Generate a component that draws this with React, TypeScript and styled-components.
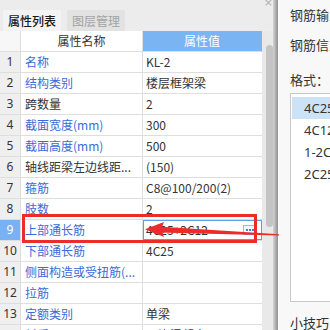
import React from 'react';
import styled, { createGlobalStyle } from 'styled-components';

const Global = createGlobalStyle`
  html, body { margin: 0; padding: 0; background: #fff; }
  body {
    font-family: "Noto Sans CJK SC", "Noto Sans", sans-serif;
    font-size: 12px;
    color: #333;
  }
`;

const Screen = styled.div`
  position: relative;
  width: 330px;
  height: 330px;
  overflow: hidden;
  display: flex;
  background: #ececec;
`;

const LeftPane = styled.div`
  width: 273px;
  flex-shrink: 0;
  display: flex;
  flex-direction: column;
  background: #ececec;
`;

const TitleStrip = styled.div`
  height: 10px;
  display: flex;
  justify-content: flex-end;
  align-items: flex-end;
  overflow: hidden;
`;

const CloseGlyph = styled.span`
  font-family: "DejaVu Sans", sans-serif;
  font-size: 11px;
  line-height: 11px;
  color: #b0b0b0;
  margin-bottom: 2px;
`;

const TabBar = styled.div`
  height: 21px;
  display: flex;
  align-items: stretch;
  gap: 6px;
  padding-left: 3px;
`;

const Tab = styled.div<{ $active?: boolean }>`
  display: flex;
  align-items: center;
  padding: 0 5px;
  font-size: 12px;
  background: ${(p) => (p.$active ? '#f3f3f3' : '#e2e2e2')};
  color: ${(p) => (p.$active ? '#1a1a1a' : '#a3a3a3')};
  font-weight: ${(p) => (p.$active ? 500 : 400)};
`;

const Body = styled.div`
  flex: 1;
  display: flex;
  min-height: 0;
`;

const Table = styled.div`
  width: 262px;
  flex-shrink: 0;
  background: #fff;
  display: flex;
  flex-direction: column;
`;

const Row = styled.div`
  display: grid;
  grid-template-columns: 21px 122px 119px;
  height: 21px;
  flex-shrink: 0;
`;

const Cell = styled.div`
  box-sizing: border-box;
  border-bottom: 1px solid #dedede;
  border-right: 1px solid #dedede;
  display: flex;
  align-items: center;
  white-space: nowrap;
  overflow: hidden;
  line-height: 20px;
`;

const NumCell = styled(Cell)<{ $selected?: boolean; $head?: boolean }>`
  justify-content: center;
  background: ${(p) => (p.$selected ? '#78b2f2' : p.$head ? '#f7f7f7' : '#efefef')};
  color: ${(p) => (p.$selected ? '#fff' : '#333')};
  font-family: "Noto Sans", sans-serif;
  font-size: 12px;
`;

const HeadCell = styled(Cell)<{ $blue?: boolean }>`
  justify-content: center;
  background: ${(p) => (p.$blue ? '#7ab4f3' : '#fff')};
  color: ${(p) => (p.$blue ? '#fff' : '#333')};
  border-right-color: ${(p) => (p.$blue ? '#7ab4f3' : '#dedede')};
`;

const NameCell = styled(Cell)<{ $link?: boolean }>`
  padding-left: 4px;
  color: ${(p) => (p.$link ? '#3a6ad8' : '#333')};
`;

const ValueCell = styled(Cell)<{ $editing?: boolean }>`
  padding-left: 3px;
  padding-right: 3px;
  justify-content: space-between;
  border-right: none;
  color: #333;
  box-shadow: ${(p) => (p.$editing ? 'inset 0 0 0 1px #5d9de8' : 'none')};
`;

const DotsButton = styled.span`
  flex-shrink: 0;
  width: 14px;
  height: 10px;
  box-sizing: border-box;
  border: 1px solid #8fbcf0;
  background: #f3f8fe;
  display: flex;
  align-items: center;
  justify-content: center;
  gap: 1px;
  margin-right: 2px;
`;

const Dot = styled.span`
  width: 2px;
  height: 2px;
  background: #3c7fdc;
`;

const Scrollbar = styled.div`
  width: 11px;
  flex-shrink: 0;
  background: #e9e9e9;
  padding-top: 14px;
  box-sizing: border-box;
`;

const Thumb = styled.div`
  margin-left: 4px;
  width: 7px;
  height: 182px;
  border-radius: 4px;
  background: #c4c4c4;
`;

const Splitter = styled.div`
  width: 5px;
  flex-shrink: 0;
  background: linear-gradient(to right, #d6d6d6, #8e8e8e);
`;

const RightPane = styled.div`
  flex: 1;
  min-width: 0;
  background: #f8f8f8;
  border-left: 1px solid #fff;
  padding-left: 11px;
  display: flex;
  flex-direction: column;
  overflow: hidden;
  white-space: nowrap;
  font-size: 13px;
  color: #333;
`;

const PanelLine = styled.div<{ $gap: number }>`
  height: 18px;
  line-height: 18px;
  margin-top: ${(p) => p.$gap}px;
  flex-shrink: 0;
`;

const ListBox = styled.div`
  margin-top: 4px;
  width: 70px;
  height: 209px;
  box-sizing: border-box;
  border: 1px solid #c9c9c9;
  background: #fff;
  padding: 3px 0 0 1px;
  flex-shrink: 0;
`;

const ListItem = styled.div<{ $selected?: boolean }>`
  height: 22px;
  line-height: 22px;
  padding-left: 12px;
  font-family: "Noto Sans", sans-serif;
  font-size: 13px;
  background: ${(p) => (p.$selected ? '#cce3f7' : 'transparent')};
`;

const Overlay = styled.svg`
  position: absolute;
  left: 0;
  top: 0;
  width: 330px;
  height: 330px;
  pointer-events: none;
`;

type RowData = { name: string; value: string; link: boolean };

const rows: RowData[] = [
  { name: '名称', value: 'KL-2', link: true },
  { name: '结构类别', value: '楼层框架梁', link: true },
  { name: '跨数量', value: '2', link: false },
  { name: '截面宽度(mm)', value: '300', link: true },
  { name: '截面高度(mm)', value: '500', link: true },
  { name: '轴线距梁左边线距...', value: '(150)', link: false },
  { name: '箍筋', value: 'C8@100/200(2)', link: true },
  { name: '肢数', value: '2', link: true },
  { name: '上部通长筋', value: '4C25+2C12', link: true },
  { name: '下部通长筋', value: '4C25', link: true },
  { name: '侧面构造或受扭筋(...', value: '', link: true },
  { name: '拉筋', value: '', link: true },
  { name: '定额类别', value: '单梁', link: true },
  { name: '材质', value: '现浇混凝土', link: true },
];

const items = ['4C25', '4C12', '1-2C25', '2C25'];

export default function App() {
  return (
    <>
      <Global />
      <Screen>
        <LeftPane>
          <TitleStrip>
            <CloseGlyph>×</CloseGlyph>
          </TitleStrip>
          <TabBar>
            <Tab $active>属性列表</Tab>
            <Tab>图层管理</Tab>
          </TabBar>
          <Body>
            <Table>
              <Row>
                <NumCell $head />
                <HeadCell>属性名称</HeadCell>
                <HeadCell $blue>属性值</HeadCell>
              </Row>
              {rows.map((r, i) => {
                const editing = i === 8;
                return (
                  <Row key={i}>
                    <NumCell $selected={editing}>{i + 1}</NumCell>
                    <NameCell $link={r.link}>{r.name}</NameCell>
                    <ValueCell $editing={editing}>
                      <span>{r.value}</span>
                      {editing && (
                        <DotsButton>
                          <Dot />
                          <Dot />
                          <Dot />
                        </DotsButton>
                      )}
                    </ValueCell>
                  </Row>
                );
              })}
            </Table>
            <Scrollbar>
              <Thumb />
            </Scrollbar>
          </Body>
        </LeftPane>
        <Splitter />
        <RightPane>
          <PanelLine $gap={6}>钢筋输入小助手</PanelLine>
          <PanelLine $gap={12}>钢筋信息</PanelLine>
          <PanelLine $gap={17}>格式：</PanelLine>
          <ListBox>
            {items.map((it, i) => (
              <ListItem key={it} $selected={i === 0}>
                {it}
              </ListItem>
            ))}
          </ListBox>
          <PanelLine $gap={12}>小技巧</PanelLine>
        </RightPane>
        <Overlay viewBox="0 0 330 330">
          <rect x="23.5" y="215.5" width="232" height="26" fill="none" stroke="#ec2b2b" strokeWidth="3" />
          <polygon points="158,226.5 279,234.3 279,235.5 158,232.5" fill="#ec2b2b" />
          <polygon points="145,229.3 164,222 161,229.5 164,237" fill="#ec2b2b" />
        </Overlay>
      </Screen>
    </>
  );
}
